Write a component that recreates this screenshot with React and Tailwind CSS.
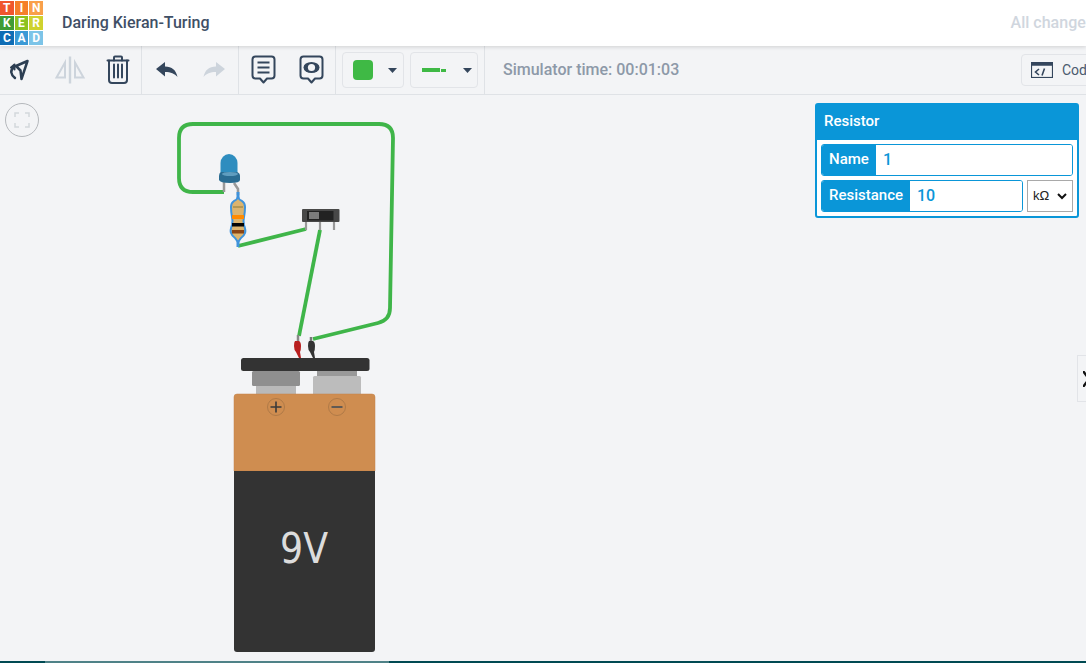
import React from 'react';

const logoCells = [
  ['T', 'bg-[#f0562d]'], ['I', 'bg-[#f57f2a]'], ['N', 'bg-[#f9a04a]'],
  ['K', 'bg-[#3f9c35]'], ['E', 'bg-[#8dc21f]'], ['R', 'bg-[#cfd22f]'],
  ['C', 'bg-[#0f6db5]'], ['A', 'bg-[#3b9ad6]'], ['D', 'bg-[#7cc4e8]'],
];

function Logo() {
  return (
    <div className="grid grid-cols-3 gap-[1px] w-[43px] h-[44px] mt-[-1px] shrink-0">
      {logoCells.map(([l, c]) => (
        <div key={l} className={`${c} flex items-center justify-center text-white text-[12px] font-bold leading-none`}>{l}</div>
      ))}
    </div>
  );
}

function Divider() {
  return <div className="w-px h-full bg-[#dfe2e6] shrink-0" />;
}

function Caret() {
  return (
    <svg width="9" height="5" viewBox="0 0 9 5"><path d="M0 0h9L4.500 5z" fill="#34465c" /></svg>
  );
}

function Toolbar() {
  return (
    <div className="h-[49px] bg-[#f3f4f6] border-b border-[#dfe2e6] flex items-center shrink-0">
      {/* rotar / espejo / borrar */}
      <div className="w-[141px] h-full flex items-center shrink-0">
        <svg className="ml-[8px]" width="22" height="22" viewBox="0 0 22 22" fill="none" stroke="#2c3e52" strokeWidth="2.500" strokeLinejoin="round" strokeLinecap="round">
          <path d="M19.500 2 8 7l4.500 4.500L13.500 20z" />
          <path d="M6 8Q0 13 7 19" />
          <path d="M3 8.500l3.500-3v5" strokeWidth="2" />
        </svg>
        <svg className="ml-[24px]" width="32" height="32" viewBox="0 0 32 32" fill="none" stroke="#cdd4dc" strokeWidth="2">
          <path d="M11 8.500v15H2.500z" />
          <path d="M21 8.500v15h8.500z" />
          <path d="M16 2.500v27" strokeWidth="2.400" />
        </svg>
        <svg className="ml-[20px]" width="24" height="30" viewBox="0 0 24 30" fill="none" stroke="#34465c" strokeWidth="2" strokeLinecap="round" strokeLinejoin="round">
          <path d="M1.500 5.500h21" />
          <path d="M8 5.500V2.500q0-1 1-1h6q1 0 1 1v3" />
          <path d="M3 5.500V25q0 3 3 3h12q3 0 3-3V5.500" />
          <path d="M8 9.500v13M12 9.500v13M16 9.500v13" />
        </svg>
      </div>
      <Divider />
      {/* deshacer / rehacer */}
      <div className="w-[96px] h-full flex items-center shrink-0">
        <svg className="ml-[14px]" width="22" height="16" viewBox="0 0 22 16" fill="#34465c">
          <path d="M0 7 9 0v4.500c7 0 11 3.500 12.500 10.500C18.500 11.500 15 10 9 10v4.500z" />
        </svg>
        <svg className="ml-[25px]" width="22" height="16" viewBox="0 0 22 16" fill="#cdd4dc">
          <path d="M22 7 13 0v4.500C6 4.500 2 8 .5 15 3.500 11.500 7 10 13 10v4.500z" />
        </svg>
      </div>
      <Divider />
      {/* notas */}
      <div className="w-[96px] h-full flex items-center shrink-0">
        <svg className="ml-[12px]" width="25" height="30" viewBox="0 0 25 30" fill="none" stroke="#34465c" strokeWidth="2" strokeLinejoin="round">
          <path d="M4.500 1.500h16q3 0 3 3v16q0 3-3 3H16l-3.500 4-3.500-4H4.500q-3 0-3-3v-16q0-3 3-3z" />
          <path d="M6.500 7.500h12M6.500 12.500h12M6.500 17.500h12" strokeWidth="2.200" />
        </svg>
        <svg className="ml-[23px]" width="25" height="30" viewBox="0 0 25 30" fill="none" stroke="#34465c" strokeWidth="2" strokeLinejoin="round">
          <path d="M4.500 1.500h16q3 0 3 3v16q0 3-3 3H16l-3.500 4-3.500-4H4.500q-3 0-3-3v-16q0-3 3-3z" />
          <ellipse cx="12.500" cy="12.500" rx="8" ry="5.500" fill="#34465c" stroke="none" />
          <circle cx="12.500" cy="12.500" r="3.600" fill="#f3f4f6" stroke="none" />
        </svg>
      </div>
      <Divider />
      {/* color y tipo de cable */}
      <div className="w-[148px] h-full flex items-center shrink-0">
        <div className="ml-[6px] w-[62px] h-[36px] border border-[#e2e4e8] rounded flex items-center">
          <div className="ml-[10px] w-[20px] h-[20px] rounded-[4px] bg-[#3fb945]" />
          <div className="ml-[15px] flex"><Caret /></div>
        </div>
        <div className="ml-[6px] w-[68px] h-[36px] border border-[#e2e4e8] rounded flex items-center">
          <div className="ml-[11px] w-[18px] h-[4px] bg-[#3fb945]" />
          <div className="ml-[1px] w-[5px] h-[3px] bg-[#3fb945]" />
          <div className="ml-[17px] flex"><Caret /></div>
        </div>
      </div>
      <Divider />
      <div className="ml-[18px] text-[16px] font-medium text-[#8d99a8] whitespace-nowrap">Simulator time: 00:01:03</div>
      <div className="ml-auto mr-[-10px] w-[75px] h-[32px] border border-[#e2e4e8] rounded flex items-center shrink-0 overflow-hidden">
        <svg className="ml-[9px] shrink-0" width="22" height="16" viewBox="0 0 22 16" fill="none" stroke="#34465c">
          <rect x="0.500" y="0.500" width="21" height="15" strokeWidth="1.200" />
          <path d="M0 2h22" strokeWidth="3.500" />
          <path d="M8 7 4.500 10 8 13M13.500 6.500 11 13.500" strokeWidth="1.600" />
        </svg>
        <span className="ml-[9px] text-[14px] text-[#4a5a6e] whitespace-nowrap">Code</span>
      </div>
    </div>
  );
}

function Circuit() {
  return (
    <svg className="absolute inset-0" width="1086" height="566" viewBox="0 95 1086 566">
      {/* bateria */}
      <rect x="252" y="371" width="48" height="15" rx="1.500" fill="#8f8f8f" />
      <rect x="256" y="386" width="40" height="9" fill="#b9b9b9" />
      <rect x="317" y="371" width="40" height="6" fill="#999" />
      <rect x="313" y="376" width="48" height="19" rx="1.500" fill="#bcbcbc" />
      <rect x="241" y="358" width="128.500" height="13" rx="2.500" fill="#333" />
      <path d="M234 471V397q0-3 3-3h135q3 0 3 3v74z" fill="#cf8d50" stroke="#c0834a" strokeWidth="0.500" />
      <path d="M234 471h141v178q0 3-3 3H237q-3 0-3-3z" fill="#333" />
      <circle cx="276" cy="407" r="8.500" fill="none" stroke="#b07a47" />
      <circle cx="337" cy="407" r="8.500" fill="none" stroke="#b07a47" />
      <path d="M270.500 407h11M276 401.500v11" stroke="#3a3a3a" strokeWidth="1.600" />
      <path d="M331.500 407h11" stroke="#555" strokeWidth="1.800" />
      <text x="280" y="563" textLength="48" lengthAdjust="spacingAndGlyphs" fontFamily="'DejaVu Sans', sans-serif" fontSize="43" fontWeight="500" fill="#dcdcdc">9V</text>

      {/* cables */}
      <g fill="none" stroke="#3fb549" strokeWidth="3.800" strokeLinejoin="round">
        <path d="M224 192H193Q179 192 179 178V138Q179 124 193 124H379Q393 124 393 138L390 308Q390 320 378 323L313 339" />
        <path d="M238 246L306 229" />
        <path d="M320 230L299 336" />
      </g>

      {/* sondas */}
      <path d="M298 335v7" stroke="#888" strokeWidth="2.500" />
      <path d="M311 337v5" stroke="#777" strokeWidth="2.500" />
      <path d="M295 341h4q2 1 2 5t-1 6l1 6h-2l-3-6q-2-2-2-6t1-5z" fill="#b81f1f" />
      <path d="M309 341h4q2 1 2 5t-1 6l1 6h-2l-3-6q-2-2-2-6t1-5z" fill="#333" />

      {/* LED */}
      <path d="M224 182v10" stroke="#999" strokeWidth="2.500" />
      <path d="M234 183l4 6v6" stroke="#999" strokeWidth="2.500" fill="none" />
      <path d="M220 173v-10a8.500 9 0 0 1 17 0v10z" fill="#2e8dbf" transform="translate(0.500 0)" />
      <path d="M219 176q0-3 2-4h16q3 1 3 4v4q0 3-10 3t-11-3z" fill="#2a6c92" />
      <ellipse cx="230" cy="174" rx="8" ry="2" fill="#5f9dbf" />

      {/* resistencia */}
      <path d="M238 192v6" stroke="#3f93dc" strokeWidth="3" />
      <path d="M238 240v7" stroke="#3f93dc" strokeWidth="3" />
      <path d="M238 197q1 3 4 4 3 2 3 6 0 5-1 10-1 4 0 8 2 5 1 8-1 3-4 5l-3 4-3-4q-3-2-4-5-1-3 1-8 1-4 0-8-1-5-1-10 0-4 3-6 3-1 4-4z" fill="#dcb46e" stroke="#3f93dc" strokeWidth="2" />
      <rect x="233" y="206.500" width="10" height="1" fill="#8a7a3a" />
      <rect x="232" y="215" width="12" height="4" fill="#ff8a00" />
      <rect x="232" y="223" width="12" height="3.500" fill="#050505" />
      <rect x="232" y="230" width="12" height="3.500" fill="#8a4414" />

      {/* interruptor */}
      <path d="M306 222v8M320 222v8M334 222v8" stroke="#999" strokeWidth="2.200" />
      <rect x="302" y="209" width="37.500" height="13" rx="1" fill="#484848" />
      <rect x="307" y="211" width="26.500" height="9.500" fill="#222" />
      <path d="M310 212v7M312 212v7M314 212v7M316 212v7M318 212v7" stroke="#d5d5d5" strokeWidth="1" />
    </svg>
  );
}

function PropertyRow({ label, value, labelWidth }) {
  return (
    <div className="flex-1 min-w-0 h-full flex border border-[#0a96d8] rounded-[3px] overflow-hidden">
      <div className={`${labelWidth} bg-[#0a96d8] text-white text-[15px] font-medium flex items-center justify-center pb-[1px] shrink-0`}>{label}</div>
      <div className="flex-1 bg-white pl-[7px] pb-[1px] flex items-center text-[16px] font-medium text-[#0a96d8]">{value}</div>
    </div>
  );
}

function ResistorPanel() {
  return (
    <div className="absolute left-[815px] top-[8px] w-[264px] border-2 border-[#0a96d8] rounded-[3px] bg-white">
      <div className="h-[35px] bg-[#0a96d8] flex items-center pl-[7px] pb-[2px] text-white text-[15px] font-medium">Resistor</div>
      <div className="px-[4px] pt-[4px] pb-[4px] flex flex-col gap-[4px]">
        <div className="h-[32px] flex"><PropertyRow label="Name" value="1" labelWidth="w-[54px]" /></div>
        <div className="h-[32px] flex gap-[4px]">
          <PropertyRow label="Resistance" value="10" labelWidth="w-[88px]" />
          <div className="w-[46px] h-full border border-[#a9a9a9] bg-white flex items-center justify-between pl-[5px] pr-[5px] shrink-0">
            <span className="text-[13px] text-[#222] font-['Liberation_Sans',sans-serif]">kΩ</span>
            <svg width="10" height="7" viewBox="0 0 10 7" fill="none" stroke="#111" strokeWidth="2"><path d="M1 1l4 4 4-4" /></svg>
          </div>
        </div>
      </div>
    </div>
  );
}

export default function App() {
  return (
    <div className="w-[1086px] h-[663px] overflow-hidden flex flex-col bg-[#f3f4f6] font-['Roboto',sans-serif]">
      <header className="h-[46px] bg-white flex items-center shadow-[0_1px_4px_rgba(0,0,0,0.15)] z-10 shrink-0">
        <Logo />
        <h1 className="ml-[19px] text-[16px] font-medium text-[#3f4f66] whitespace-nowrap">Daring Kieran-Turing</h1>
        <span className="ml-auto mr-[-8px] text-[16px] font-medium text-[#d0d6de] whitespace-nowrap">All changes</span>
      </header>
      <Toolbar />
      <main className="relative flex-1">
        <Circuit />
        <button className="absolute left-[5px] top-[8px] w-[34px] h-[34px] rounded-full border border-[#b5b8bc] flex items-center justify-center">
          <svg width="16" height="16" viewBox="0 0 16 16" fill="none" stroke="#d3d7dc" strokeWidth="1.500">
            <path d="M1 5V1h4M11 1h4v4M15 11v4h-4M5 15H1v-4" />
          </svg>
        </button>
        <ResistorPanel />
        <div className="absolute left-[1077px] top-[260px] w-[12px] h-[47px] border border-[#e2e4e8] flex items-center overflow-hidden">
          <svg width="9" height="16" viewBox="0 0 9 16" className="ml-[5px] shrink-0" fill="none" stroke="#111" strokeWidth="2.500"><path d="M0 0l6 8-6 8" /></svg>
        </div>
      </main>
      <div className="h-[2px] flex shrink-0">
        <div className="w-[45px] bg-[#004a52]" />
        <div className="w-[344px] bg-[#4f8287]" />
        <div className="flex-1 bg-[#004a52]" />
      </div>
    </div>
  );
}
